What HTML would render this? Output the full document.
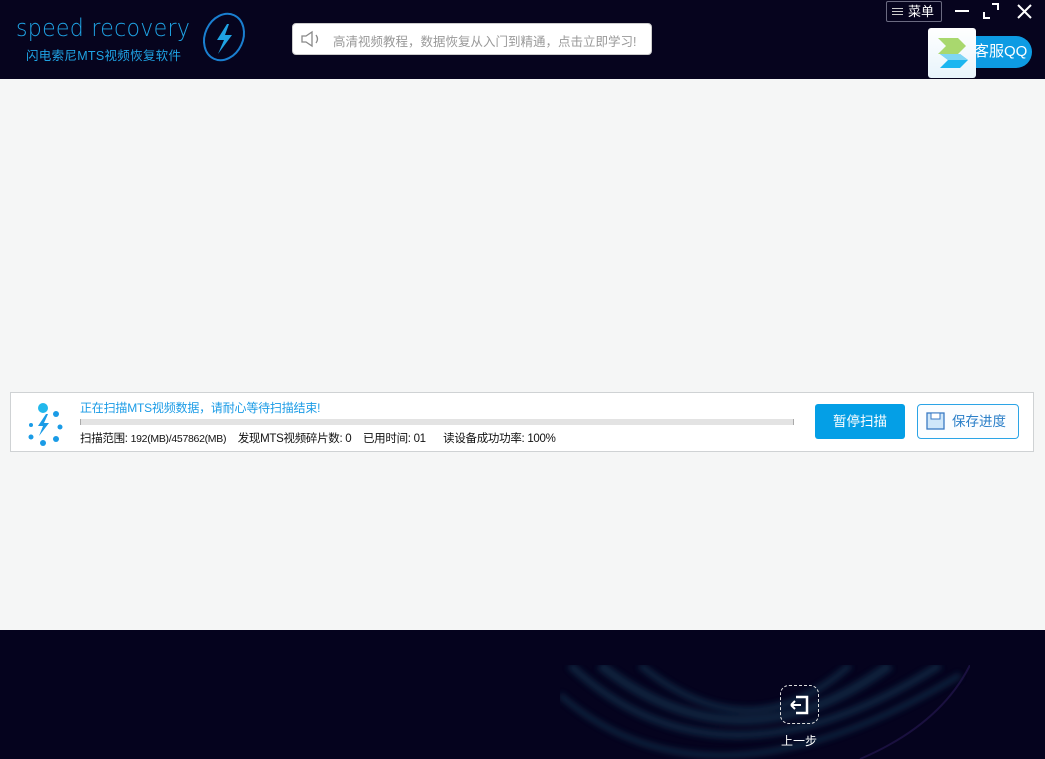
<!DOCTYPE html>
<html><head><meta charset="utf-8"><style>
*{margin:0;padding:0;box-sizing:border-box}
body{width:1045px;height:759px;overflow:hidden;background:#f5f6f6;font-family:"Liberation Sans","Noto Sans CJK SC",sans-serif;position:relative}
.top{position:absolute;left:0;top:0;width:1045px;height:79px;background:#06041e}
.bot{position:absolute;left:0;top:630px;width:1045px;height:129px;background:#05031e;overflow:hidden}
.abs{position:absolute}
</style></head><body>
<div class="top">
  <div class="abs" style="left:16px;top:14px;color:#1fa3e4;font-size:24px;letter-spacing:0.3px;font-family:'DejaVu Sans',sans-serif;font-weight:300;transform:scaleX(0.92);transform-origin:left">speed recovery</div>
  <div class="abs" style="left:26px;top:45px;color:#1fa3e4;font-size:12.5px;letter-spacing:0.3px">闪电索尼MTS视频恢复软件</div>
  <svg class="abs" style="left:196px;top:10px" width="56" height="54" viewBox="0 0 56 54"><ellipse cx="28" cy="27" rx="19" ry="24" transform="rotate(25 28 27)" fill="none" stroke="#1a7fd0" stroke-width="2"/><path d="M31 14 L21 30 L28 30 L22 44 L36 25 L29 25 L33 14Z" fill="#1fa3e4"/></svg>
  <div class="abs" style="left:292px;top:23px;width:360px;height:32px;background:#fff;border-radius:4px;border:1px solid #ccc"></div>
  <svg class="abs" style="left:300px;top:30px" width="24" height="18" viewBox="0 0 24 18"><path d="M2 6h4l6-4v14l-6-4H2z" fill="none" stroke="#888" stroke-width="1.3"/><path d="M16 5q3 4 0 8" fill="none" stroke="#888" stroke-width="1.3"/></svg>
  <div class="abs" style="left:333px;top:31px;color:#999;font-size:12.5px">高清视频教程，数据恢复从入门到精通，点击立即学习!</div>
  <div class="abs" style="left:886px;top:1px;width:56px;height:21px;border:1px solid #6a6a80;border-radius:2px;color:#fff;font-size:13px;padding-left:21px;line-height:19px">菜单</div>
  <div class="abs" style="left:892px;top:8px;width:11px;height:1px;background:#ccc;box-shadow:0 3px 0 #ccc,0 6px 0 #ccc"></div>
  <div class="abs" style="left:955px;top:10px;width:14px;height:2px;background:#fff"></div>
  <svg class="abs" style="left:983px;top:3px" width="16" height="16"><path d="M1 9v6h6M9 1h6v6" stroke="#fff" stroke-width="2" fill="none"/></svg>
  <svg class="abs" style="left:1017px;top:4px" width="15" height="15"><path d="M1 1L14 14M14 1L1 14" stroke="#fff" stroke-width="2"/></svg>
  <div class="abs" style="left:960px;top:36px;width:72px;height:32px;background:#0d9be3;border-radius:16px;color:#fff;font-size:15px;line-height:32px;padding-left:14px">客服QQ</div>
  <div class="abs" style="left:928px;top:28px;width:48px;height:50px;background:linear-gradient(#fff,#e8f4fb);border-radius:3px"></div>
  <svg class="abs" style="left:932px;top:32px" width="40" height="42"><path d="M6 6h20l8 8H14z M14 14h20l-8 8H6z" fill="#a9d86e"/><path d="M8 22h20l8 6H16z M16 28h20l-8 8H8z" fill="#1cb6f0"/><path d="M8 22h20l8 6H16z" fill="#7fd6f5"/></svg>
</div>

<div class="abs" style="left:10px;top:392px;width:1024px;height:60px;background:#fff;border:1px solid #cfd2d4"></div>
<svg class="abs" style="left:24px;top:400px" width="44" height="48"><circle cx="19" cy="8" r="5" fill="#22b8ec"/><circle cx="32" cy="14" r="3" fill="#1a9be6"/><circle cx="36" cy="27" r="2.5" fill="#1a9be6"/><circle cx="32" cy="39" r="3" fill="#1a9be6"/><circle cx="19" cy="43" r="3" fill="#1a9be6"/><circle cx="7" cy="37" r="2.5" fill="#1a9be6"/><circle cx="7" cy="25" r="2" fill="#1a9be6"/><path d="M22 14l-8 12h5l-4 10 10-13h-5l4-9z" fill="#1a9be6"/></svg>
<div class="abs" style="left:80px;top:399px;color:#1a9be6;font-size:12px;letter-spacing:-0.2px">正在扫描MTS视频数据，请耐心等待扫描结束!</div>
<div class="abs" style="left:80px;top:419px;width:714px;height:6px;background:#e3e3e3;border-right:1px solid #aaa;border-left:1px solid #aaa"></div>
<div class="abs" style="left:80px;top:430px;color:#111;font-size:11.5px;letter-spacing:-0.3px;white-space:pre">扫描范围: <span style="font-size:10.5px">192(MB)/457862(MB)</span>    发现MTS视频碎片数: 0    已用时间: 01      读设备成功功率: 100%</div>
<div class="abs" style="left:815px;top:404px;width:90px;height:35px;background:#049fe6;border-radius:3px;color:#fff;font-size:13.5px;line-height:35px;text-align:center">暂停扫描</div>
<div class="abs" style="left:917px;top:404px;width:102px;height:35px;background:#fbfdff;border:1px solid #2ba4e6;border-radius:4px;color:#2b7fc8;font-size:13.5px;line-height:33px;padding-left:34px">保存进度</div>
<svg class="abs" style="left:926px;top:412px" width="20" height="19"><rect x="1" y="1" width="17" height="16" fill="#cfe7fa" stroke="#3a7ac4" stroke-width="1.3"/><rect x="5" y="1" width="9" height="6" fill="#fff" stroke="#3a7ac4"/></svg>

<div class="bot">
  <svg class="abs" style="left:560px;top:35px" width="410" height="94"><defs><filter id="b"><feGaussianBlur stdDeviation="3"/></filter></defs>
  <g fill="none" stroke="#123a55" opacity="0.55" filter="url(#b)"><path d="M10 0 Q160 140 380 0" stroke-width="8"/><path d="M40 0 Q180 110 330 0" stroke-width="10"/><path d="M80 0 Q190 90 290 0" stroke-width="7"/><path d="M0 30 Q150 160 400 10" stroke-width="6"/></g><path d="M300 94 Q380 60 410 0" stroke="#24174d" stroke-width="2" fill="none" opacity="0.7"/></svg>
  <div class="abs" style="left:780px;top:55px;width:39px;height:39px;border:1.5px dashed #ddd;border-radius:9px"></div>
  <svg class="abs" style="left:788px;top:64px" width="24" height="22"><path d="M8 3h11v16H8" stroke="#fff" stroke-width="2.5" fill="none"/><path d="M3 11h10M3 11l4-4M3 11l4 4" stroke="#fff" stroke-width="2" fill="none"/></svg>
  <div class="abs" style="left:781px;top:102px;color:#fff;font-size:12px">上一步</div>
</div>
</body></html>
